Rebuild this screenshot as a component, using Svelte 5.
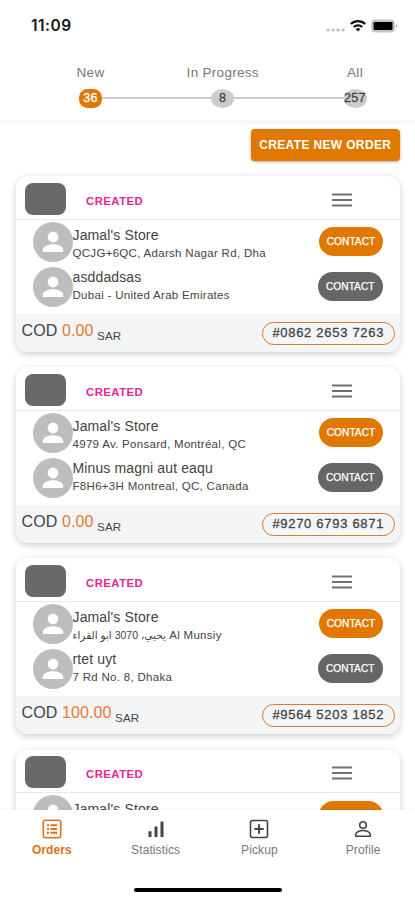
<script lang="ts">
	type Place = { name: string; address?: string; arabic?: string }
	type Order = { from: Place; to?: Place; amount?: string; code?: string }

	const steps = [
		{ label: 'New', count: 36 },
		{ label: 'In Progress', count: 8 },
		{ label: 'All', count: 257 }
	]

	const orders: Order[] = [
		{
			from: { name: "Jamal's Store", address: 'QCJG+6QC, Adarsh Nagar Rd, Dha' },
			to: { name: 'asddadsas', address: 'Dubai - United Arab Emirates' },
			amount: '0.00',
			code: '#0862 2653 7263'
		},
		{
			from: { name: "Jamal's Store", address: '4979 Av. Ponsard, Montréal, QC' },
			to: { name: 'Minus magni aut eaqu', address: 'F8H6+3H Montreal, QC, Canada' },
			amount: '0.00',
			code: '#9270 6793 6871'
		},
		{
			from: { name: "Jamal's Store", arabic: 'يحيي، 3070 ابو القراء', address: 'Al Munsiy' },
			to: { name: 'rtet uyt', address: '7 Rd No. 8, Dhaka' },
			amount: '100.00',
			code: '#9564 5203 1852'
		},
		{ from: { name: "Jamal's Store" } }
	]

	const tabs = ['Orders', 'Statistics', 'Pickup', 'Profile']

	let step = $state(0)
	let tab = $state('Orders')
</script>

{#snippet person(place: Place, main: boolean)}
	<div class="person" class:main>
		<svg class="avatar" viewBox="0 0 40 40">
			<circle cx="20" cy="20" r="20" fill="#bdbdbd" />
			<circle cx="20" cy="15" r="5.4" fill="#fff" />
			<path d="M9.8 30v-2.4c0-3.6 6.8-5.4 10.2-5.4s10.2 1.8 10.2 5.4V30z" fill="#fff" />
		</svg>
		<div class="place">
			<div class="name">{place.name}</div>
			{#if place.address}
				<div class="address">
					{#if place.arabic}<bdi class="arabic" dir="rtl">{place.arabic}</bdi>{/if}
					{place.address}
				</div>
			{/if}
		</div>
		{#if place.address}
			<button class="contact">CONTACT</button>
		{:else}
			<div class="contact"></div>
		{/if}
	</div>
{/snippet}

<div class="screen">
	<div class="status">
		<span class="time">11:09</span>
		<svg width="76" height="16" viewBox="0 0 76 16">
			<g fill="#bdbdbd">
				<circle cx="4" cy="12" r="1.6" />
				<circle cx="9" cy="12" r="1.6" />
				<circle cx="14" cy="12" r="1.6" />
				<circle cx="19" cy="12" r="1.6" />
			</g>
			<g fill="none" stroke="#111" stroke-width="2.1">
				<path d="M26.8 6a10.4 10.4 0 0 1 14.4 0" />
				<path d="M29.7 9.1a6.2 6.2 0 0 1 8.6 0" />
			</g>
			<path d="M31.7 11.2a3.3 3.3 0 0 1 4.6 0l-2.3 2.4z" fill="#111" />
			<rect x="47.7" y="2" width="22.6" height="12" rx="3.2" fill="#c4c4c4" stroke="#c4c4c4" stroke-width="1" />
			<rect x="49.5" y="4" width="19" height="8" rx="1.3" fill="#000" />
			<path d="M72 6.2q2 1.8 0 3.6z" fill="#999" />
		</svg>
	</div>

	<div class="steps">
		{#each steps as s, i}
			<button class="step" class:active={step === i} onclick={() => (step = i)}>
				<span>{s.label}</span>
				<span class="count">{s.count}</span>
			</button>
		{/each}
	</div>

	<main>
		<button class="create">CREATE NEW ORDER</button>
		{#each orders as order}
			<article>
				<header>
					<div class="thumb"></div>
					<span class="state">CREATED</span>
					<svg width="20" height="14" viewBox="0 0 20 14">
						<path d="M0 1.5h20M0 7h20M0 12.5h20" stroke="#707070" stroke-width="1.8" />
					</svg>
				</header>
				<div class="people">
					{@render person(order.from, true)}
					{#if order.to}{@render person(order.to, false)}{/if}
				</div>
				{#if order.code}
					<footer>
						<div class="price">COD <b>{order.amount}</b> <small>SAR</small></div>
						<span class="code">{order.code}</span>
					</footer>
				{/if}
			</article>
		{/each}
	</main>

	<nav>
		{#each tabs as t}
			<button class:active={tab === t} onclick={() => (tab = t)}>
				<svg width="20" height="20" viewBox="0 0 20 20" fill="none" stroke="currentColor" stroke-width="1.6">
					{#if t === 'Orders'}
						<rect x="1.3" y="1.3" width="17.4" height="17.4" rx="2.2" />
						<path d="M5 6.2h2M8.5 6.2H15M5 10h2M8.5 10H15M5 13.8h2M8.5 13.8H15" stroke-width="1.9" />
					{:else if t === 'Statistics'}
						<path d="M4 12.3V18M10 7.5V18M16 2.5V18" stroke-width="3" />
					{:else if t === 'Pickup'}
						<rect x="1.5" y="1.5" width="17" height="17" rx="2" />
						<path d="M10 5.3v9.4M5.3 10h9.4" stroke-width="1.9" />
					{:else}
						<circle cx="10" cy="6" r="3.3" />
						<path d="M2.7 17.2v-1.7c0-2.7 4.5-4 7.3-4s7.3 1.3 7.3 4v1.7z" />
					{/if}
				</svg>
				<span>{t}</span>
			</button>
		{/each}
	</nav>
	<div class="home"></div>
</div>

<style>
	.screen {
		display: flex;
		flex-direction: column;
		width: 415px;
		height: 900px;
		overflow: hidden;
		background: #fff;
		color: #444;
		font-family: 'Liberation Sans', Arial, sans-serif;
	}

	button {
		border: 0;
		padding: 0;
		background: none;
		color: inherit;
		font-family: inherit;
		white-space: nowrap;
	}

	.status {
		display: flex;
		justify-content: space-between;
		align-items: center;
		flex: none;
		box-sizing: border-box;
		height: 50px;
		padding: 1px 15px 0 31px;
	}

	.time {
		font: 600 15.5px/20px Inter, sans-serif;
		letter-spacing: 0.5px;
		color: #161616;
	}

	.steps {
		display: flex;
		justify-content: space-between;
		flex: none;
		box-sizing: border-box;
		height: 74px;
		padding: 15px 19.5px 0 50px;
		border-bottom: 4px solid #f8f8f8;
		background: linear-gradient(#ccc, #ccc) 90px 46.5px / 265px 2px no-repeat;
	}

	.step {
		display: flex;
		flex-direction: column;
		align-items: center;
		gap: 7.5px;
		width: 81px;
		font-size: 13.5px;
		line-height: 16px;
		letter-spacing: 0.3px;
		color: #777;
	}

	.count {
		display: flex;
		justify-content: center;
		width: 23px;
		height: 19px;
		border-radius: 8.5px;
		background: #ccc;
		color: #444;
		font-size: 12.5px;
		line-height: 19px;
		letter-spacing: 0.3px;
		-webkit-text-stroke: 0.3px;
	}

	.step:not(.active) .count {
		border-radius: 50%;
	}

	.active .count {
		background: #e07800;
		color: #fff;
	}

	main {
		display: flex;
		flex: 1;
		flex-direction: column;
		gap: 15.8px;
		min-height: 0;
		overflow: hidden;
		padding: 5px 15.5px 0 16px;
	}

	.create {
		flex: none;
		align-self: flex-end;
		width: 148.5px;
		height: 31.5px;
		border-radius: 4px;
		background: #e07800;
		box-shadow: 0 1px 3px #0005;
		color: #fff;
		font-size: 12px;
		font-weight: bold;
		letter-spacing: 0.35px;
	}

	article {
		flex: none;
		height: 175.3px;
		overflow: hidden;
		border-radius: 12px;
		box-shadow: 0 2px 7px #0003;
	}

	header {
		display: flex;
		align-items: center;
		box-sizing: border-box;
		height: 43.5px;
		padding: 2px 47.5px 0 9px;
		border-bottom: 1.5px solid #e8e8e8;
	}

	.thumb {
		width: 41px;
		height: 32px;
		border-radius: 8px;
		background: #696969;
	}

	.state {
		flex: 1;
		padding: 5px 0 0 20px;
		color: #e32694;
		font-size: 11.3px;
		font-weight: bold;
		letter-spacing: 0.5px;
	}

	header svg {
		margin-top: 2px;
	}

	.people {
		display: flex;
		flex-direction: column;
		gap: 5px;
		height: 92.5px;
		padding: 2px 16.5px 0 16.5px;
	}

	.person {
		display: flex;
		align-items: center;
		height: 40px;
	}

	.avatar {
		flex: none;
		width: 40px;
		height: 40px;
	}

	.place {
		flex: 1;
		align-self: flex-start;
		padding-top: 1.5px;
		white-space: nowrap;
	}

	.main .place {
		padding-top: 4.5px;
	}

	.name {
		font-size: 14px;
		line-height: 18px;
		letter-spacing: 0.13px;
	}

	.address {
		height: 18px;
		font-size: 11.5px;
		line-height: 18px;
		letter-spacing: 0.3px;
	}

	.arabic {
		font-family: 'Liberation Sans', 'DejaVu Sans', sans-serif;
		font-size: 10.5px;
		letter-spacing: 0;
	}

	.contact {
		width: 65.5px;
		height: 29px;
		border-radius: 15px;
		background: #666;
		color: #fff;
		font-size: 10.2px;
		-webkit-text-stroke: 0.25px;
	}

	.main .contact {
		width: 64px;
		background: #e07800;
	}

	footer {
		display: flex;
		justify-content: space-between;
		align-items: center;
		box-sizing: border-box;
		height: 38px;
		padding: 0 5px 0 5.5px;
		background: #f3f5f7;
	}

	.price {
		font-size: 16px;
		line-height: 20px;
		letter-spacing: 0.1px;
		margin-top: -3px;
	}

	.price b {
		color: #e47b30;
		font-weight: normal;
	}

	.price small {
		position: relative;
		top: 4px;
		margin-left: -1px;
		font-size: 11.6px;
		letter-spacing: 0.2px;
	}

	.code {
		box-sizing: border-box;
		width: 132.5px;
		height: 23px;
		border: 1.7px solid #df7923;
		border-radius: 12px;
		font-size: 13px;
		line-height: 20.5px;
		letter-spacing: 0.7px;
		text-align: center;
		-webkit-text-stroke: 0.3px;
	}

	nav {
		display: flex;
		flex: none;
		height: 77.5px;
		background: #fff;
		box-shadow: 0 -1px 3px #0000000d;
	}

	nav button {
		display: flex;
		flex: 1;
		flex-direction: column;
		align-items: center;
		gap: 3px;
		padding-top: 9px;
		color: #444;
		font-size: 12px;
		line-height: 16px;
		letter-spacing: 0.1px;
	}

	nav span {
		color: #777;
	}

	nav .active,
	nav .active span {
		color: #df7019;
	}

	nav .active span {
		font-weight: bold;
	}

	.home {
		flex: none;
		align-self: center;
		width: 148px;
		height: 4.5px;
		margin-bottom: 8px;
		border-radius: 3px;
		background: #000;
	}
</style>
